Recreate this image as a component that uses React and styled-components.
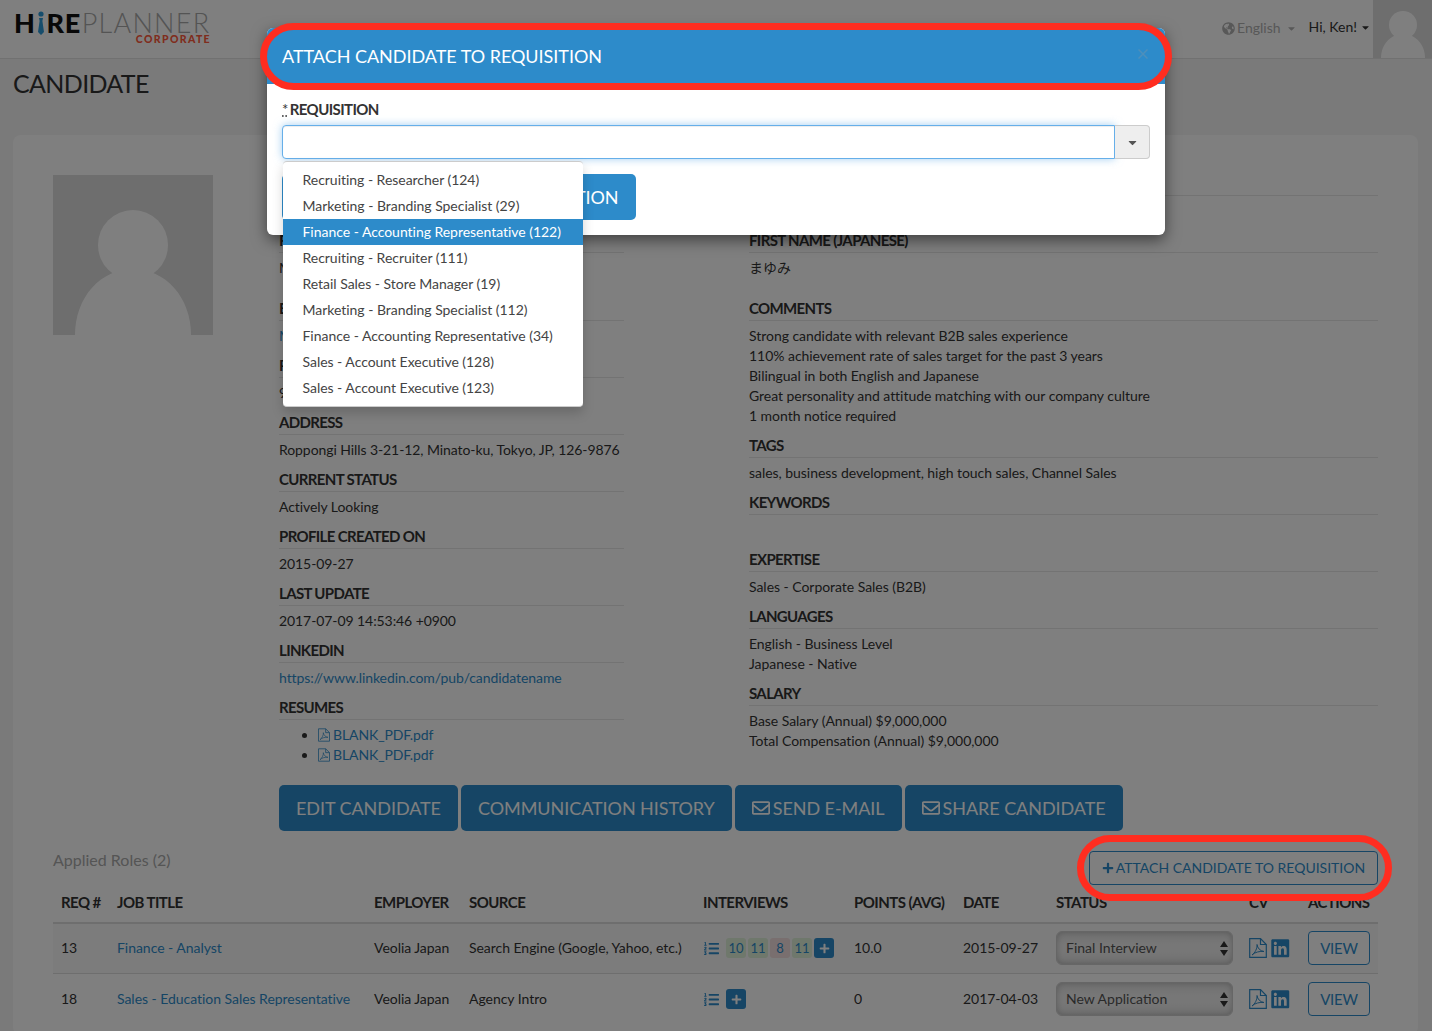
import React from 'react';
import styled, { createGlobalStyle } from 'styled-components';
import { FaGlobeAmericas, FaCaretDown, FaRegEnvelope, FaPlus, FaListOl, FaLinkedin } from 'react-icons/fa';

const Global = createGlobalStyle`
  html, body { margin: 0; padding: 0; height: 1031px; overflow: hidden; background: #f4f4f4; }
  body { font-family: Lato, "Noto Sans CJK JP", "Liberation Sans", sans-serif; font-size: 14px; line-height: 20px; color: #333; }
  * { box-sizing: border-box; }
`;

const Page = styled.div`position: relative; width: 1432px; height: 1031px; overflow: hidden;`;
const Nav = styled.header`
  display: flex; align-items: flex-start; height: 59px; background: #fff; border-bottom: 1px solid #e2e2e2;
`;
const Logo = styled.div`
  margin-left: 14px; width: 197px; padding-top: 9px;
`;
const LogoLine = styled.div`display: flex; align-items: center; height: 27px; font-size: 27px; line-height: 27px;`;
const LogoBold = styled.span`font-weight: 900; color: #111; letter-spacing: .6px;`;
const LogoThin = styled.span`font-weight: 300; color: #a8a8a8; letter-spacing: 1.25px;`;
const LogoSub = styled.div`
  text-align: right; font-size: 10.5px; line-height: 10px; font-weight: 900; letter-spacing: 1.35px; color: #ff5a3c; margin-top: -2px;
`;
const NavRight = styled.div`margin-left: auto; display: flex; align-items: center; height: 58px;`;
const Lang = styled.div`display: flex; align-items: center; color: #b0b0b0; font-size: 14px; margin-right: 12px; margin-top: -2px;
  svg:first-child { font-size: 13px; margin-right: 2px; } svg:last-child { font-size: 11px; margin-left: 5px; }`;
const Hi = styled.div`display: flex; align-items: center; color: #333; font-size: 14px; margin-top: -4px; margin-right: 2px;
  svg { font-size: 11px; margin-left: 3px; }`;
const NavAvatar = styled.svg`display: block; width: 59px; height: 58px; background: #dcdcdc;`;
const Title = styled.h1`margin: 0; padding: 9px 0 0 13px; height: 76px; font-size: 25px; line-height: 30px; font-weight: 400; color: #333; letter-spacing: -.65px;`;

const Panel = styled.main`
  margin: 0 14px 0 13px; background: #fff; border-radius: 8px; padding: 40px 40px 0; height: 900px;
`;
const Top = styled.div`display: flex;`;
const Photo = styled.svg`flex: none; width: 160px; height: 160px; background: #dcdcdc; margin-right: 66px;`;
const LeftCol = styled.section`flex: none; width: 345px; margin-right: 125px; margin-top: -1px; letter-spacing: -.08px;`;
const RightCol = styled.section`flex: 1; margin-top: -1px; letter-spacing: -.04px;`;
const Label = styled.div`
  font-weight: 700; font-size: 15px; line-height: 19px; padding-bottom: 2px; border-bottom: 1px solid #e7e7e7; margin-bottom: 5px; color: #333; letter-spacing: -.65px; white-space: nowrap;
`;
const Value = styled.div`min-height: 20px; margin-bottom: ${p => p.$extra ? '21px' : '10px'}; white-space: nowrap; ${p => p.$jp ? 'height:20px;' : ''}`;
const A = styled.a`color: #2d8bca; text-decoration: none;`;
const Resumes = styled.ul`margin: 0 0 10px; padding: 0 0 0 39px; list-style: disc;
  li { height: 20px; letter-spacing: -.1px; } svg { margin-right: 3px; vertical-align: -2px; }`;
const Actions = styled.div`display: flex; gap: 3px; margin: 10px 0 0 226px; height: 46px;`;
const BigBtn = styled.button`
  height: 46px; background: #2d8bca; color: #fff; border: 0; border-radius: 5px; padding: 0 17px; font-family: inherit; font-size: 18px; line-height: 46px; letter-spacing: -.06px; white-space: nowrap; display: flex; align-items: center;
  svg { font-size: 18px; margin-right: 3px; }
`;
const RolesHead = styled.div`display: flex; justify-content: space-between; align-items: flex-start; margin-top: 20px; height: 34px;`;
const RolesTitle = styled.div`font-size: 16px; color: #aaa; line-height: 20px; letter-spacing: 0; margin-top: -1px;`;
const OutlineBtn = styled.button`
  width: 289px; height: 34px; background: #fff; border: 1px solid #2d8bca; border-radius: 4px; color: #2d8bca; font-family: inherit; font-size: 14px; letter-spacing: -.01px; display: flex; align-items: center; justify-content: center; padding: 0 0 2px; white-space: nowrap;
  svg { font-size: 12px; margin-right: 2px; margin-top: 2px; }
`;
const Table = styled.table`width: 1325px; border-collapse: collapse; table-layout: fixed;
  tbody tr:last-child td { border-bottom: 0; }`;
const Th = styled.th`height: 38px; padding: 0 8px 3px; text-align: left; font-size: 15px; font-weight: 700; border-bottom: 2px solid #ddd; white-space: nowrap; letter-spacing: -.55px; vertical-align: middle;`;
const Tr = styled.tr`background: ${p => p.$striped ? '#f9f9f9' : '#fff'};`;
const Td = styled.td`height: ${p => p.$h}px; padding: 0 8px; border-bottom: 1px solid #ddd; white-space: nowrap; letter-spacing: -.04px; vertical-align: middle;`;
const Interviews = styled.div`display: flex; align-items: center; gap: 2px; color: #2d8bca;
  > svg { font-size: 15px; margin: 0 5px 0 1px; }`;
const Badge = styled.span`
  display: flex; align-items: center; justify-content: center; width: 20px; height: 20px; border-radius: 3px; font-size: 13px; color: #2d8bca; background: ${p => p.$bg};
`;
const AddBadge = styled(Badge)`background: #2d8bca; color: #fff; svg { font-size: 11px; }`;
const SelectWrap = styled.div`position: relative; width: 177px; height: 34px;`;
const Select = styled.div`
  height: 34px; border: 1px solid #ccc; border-radius: 6px; padding: 0 9px; line-height: 32px; color: #555; background: linear-gradient(#e0e0e0, #efefef 40%, #efefef 60%, #e0e0e0); box-shadow: inset 0 0 6px rgba(0,0,0,.22); font-size: 14px; letter-spacing: 0;
`;
const Arrows = styled.svg`position: absolute; right: 5px; top: 10px; width: 8px; height: 15px; fill: #333;`;
const CvIcons = styled.div`display: flex; align-items: center; color: #2d8bca; font-size: 20.5px; gap: 3px;`;
const ViewBtn = styled.button`
  width: 62px; height: 34px; background: #fff; border: 1px solid #2d8bca; border-radius: 4px; color: #2d8bca; font-family: inherit; font-size: 15px; letter-spacing: -.2px; padding: 0;
`;

const Overlay = styled.div`position: absolute; inset: 0; background: rgba(0,0,0,.5);`;
const Modal = styled.div`
  position: absolute; left: 267px; top: 28px; width: 898px; height: 207px; background: #fff; border-radius: 6px; box-shadow: 0 5px 15px rgba(0,0,0,.5);
`;
const ModalHead = styled.div`
  height: 56px; background: #2d8bca; color: #fff; display: flex; align-items: center; justify-content: space-between; padding: 0 17px 0 15px; border-radius: 6px 6px 0 0; font-size: 18px; letter-spacing: -.03px;
`;
const Close = styled.svg`width: 10px; height: 10px; stroke: #4d8fbb; stroke-width: 1.5; margin-top: -4px;`;
const ModalBody = styled.div`padding: 15px; position: relative;`;
const ReqLabel = styled.div`font-size: 15px; font-weight: 700; line-height: 20px; height: 26px; letter-spacing: -.6px; color: #333;
  abbr { font-weight: 400; text-decoration: underline dotted; margin-right: 2px; }`;
const Combo = styled.div`display: flex; height: 34px; width: 868px;`;
const ComboInput = styled.div`
  flex: 1; border: 1px solid #66afe9; border-radius: 4px 0 0 4px; background: #fff; box-shadow: inset 0 1px 1px rgba(0,0,0,.075), 0 0 8px rgba(102,175,233,.6);
`;
const ComboBtn = styled.div`
  width: 35px; border: 1px solid #ccc; border-left: 0; border-radius: 0 4px 4px 0; background: #eee; display: flex; align-items: center; justify-content: center; color: #555; font-size: 13px;
`;
const SubmitBtn = styled(BigBtn)`margin-top: 15px; width: 354px; justify-content: center; padding: 0;`;
const Menu = styled.ul`
  position: absolute; left: 16px; top: 77px; width: 300px; margin: 0; padding: 5px 0; list-style: none; background: #fff; border: solid #ccc; border-width: 1px 0; border-radius: 4px; box-shadow: 0 6px 12px rgba(0,0,0,.175);
`;
const MenuItem = styled.li`
  height: 26px; line-height: 26px; padding: 0 19.5px; font-size: 14px; letter-spacing: -.03px; white-space: nowrap; color: ${p => p.$active ? '#fff' : '#444'}; background: ${p => p.$active ? '#2d8bca' : 'transparent'};
`;
const Ring = styled.div`
  position: absolute; left: ${p => p.$x}px; top: ${p => p.$y}px; width: ${p => p.$w}px; height: ${p => p.$h}px; border: 7px solid #ff2d20; border-radius: 34px; pointer-events: none;
`;

const PdfIcon = ({ w, h }) => (
  <svg width={w} height={h} viewBox="0 0 18 20" fill="none" stroke="currentColor" strokeWidth="1.2">
    <path d="M.7.7 H11.5 L17.3 6.5 V19.3 H.7 Z" />
    <path d="M11.5.7 V6.5 H17.3" />
    <path d="M3 17 C6 15 8.5 10 8 6.5 C8.5 10 11 13 15 13.5 C11 13 6 14 3 17 Z" strokeWidth="1" />
  </svg>
);

const Silhouette = () => (
  <>
    <circle cx="80" cy="70" r="35" fill="#fff" />
    <path d="M22 160 C22 122 48 94 80 94 C112 94 138 122 138 160 Z" fill="#fff" />
  </>
);

const leftRows = [
  ['LAST NAME', 'Tanaka'],
  ['FIRST NAME', 'Mayumi', true],
  ['E-MAIL', <A key="m">Mayumi@example.com</A>],
  ['PHONE', '90-1234-5678'],
  ['ADDRESS', 'Roppongi Hills 3-21-12, Minato-ku, Tokyo, JP, 126-9876'],
  ['CURRENT STATUS', 'Actively Looking'],
  ['PROFILE CREATED ON', '2015-09-27'],
  ['LAST UPDATE', '2017-07-09 14:53:46 +0900'],
  ['LINKEDIN', <A key="l">https://www.linkedin.com/pub/candidatename</A>],
];

const menuItems = [
  'Recruiting - Researcher (124)',
  'Marketing - Branding Specialist (29)',
  'Finance - Accounting Representative (122)',
  'Recruiting - Recruiter (111)',
  'Retail Sales - Store Manager (19)',
  'Marketing - Branding Specialist (112)',
  'Finance - Accounting Representative (34)',
  'Sales - Account Executive (128)',
  'Sales - Account Executive (123)',
];

const widths = [56, 257, 95, 234, 151, 109, 93, 193, 59, 78];
const heads = ['REQ #', 'JOB TITLE', 'EMPLOYER', 'SOURCE', 'INTERVIEWS', 'POINTS (AVG)', 'DATE', 'STATUS', 'CV', 'ACTIONS'];
const G = '#dff0d8';
const R = '#f2dede';

const Status = ({ children }) => (
  <SelectWrap>
    <Select>{children}</Select>
    <Arrows viewBox="0 0 8 15"><path d="M4 0 L8 6 H0 Z M4 15 L0 9 H8 Z" /></Arrows>
  </SelectWrap>
);

const Row = ({ id, title, source, badges, points, date, status, striped, h }) => (
  <Tr $striped={striped}>
    <Td $h={h}>{id}</Td>
    <Td $h={h}><A>{title}</A></Td>
    <Td $h={h}>Veolia Japan</Td>
    <Td $h={h}>{source}</Td>
    <Td $h={h}>
      <Interviews>
        <FaListOl />
        {badges.map(([n, bg], i) => <Badge key={i} $bg={bg}>{n}</Badge>)}
        <AddBadge><FaPlus /></AddBadge>
      </Interviews>
    </Td>
    <Td $h={h}>{points}</Td>
    <Td $h={h}>{date}</Td>
    <Td $h={h}><Status>{status}</Status></Td>
    <Td $h={h}><CvIcons><PdfIcon w={18} h={20} /><FaLinkedin /></CvIcons></Td>
    <Td $h={h}><ViewBtn>VIEW</ViewBtn></Td>
  </Tr>
);

export default function App() {
  return (
    <Page>
      <Global />
      <Nav>
        <Logo>
          <LogoLine>
            <LogoBold>H</LogoBold>
            <svg width="10" height="24" viewBox="0 0 10 24" style={{ margin: '0 1px 0 0' }}>
              <circle cx="5" cy="3" r="2.6" fill="#2d9bd8" />
              <path d="M3 7 H7 L6.4 10 L8 21 L5 24 L2 21 L3.6 10 Z" fill="#2d9bd8" />
            </svg>
            <LogoBold>RE</LogoBold>
            <LogoThin style={{ marginLeft: 1 }}>PLANNER</LogoThin>
          </LogoLine>
          <LogoSub>CORPORATE</LogoSub>
        </Logo>
        <NavRight>
          <Lang><FaGlobeAmericas />English<FaCaretDown /></Lang>
          <Hi>Hi, Ken!<FaCaretDown /></Hi>
          <NavAvatar viewBox="0 0 59 58">
            <circle cx="30" cy="25" r="14" fill="#fff" />
            <path d="M8 58 C8 44 18 34 30 34 C42 34 52 44 52 58 Z" fill="#fff" />
          </NavAvatar>
        </NavRight>
      </Nav>
      <Title>CANDIDATE</Title>
      <Panel>
        <Top>
          <Photo viewBox="0 0 160 160"><Silhouette /></Photo>
          <LeftCol>
            {leftRows.map(([l, v, extra]) => (
              <div key={l}>
                <Label>{l}</Label>
                <Value $extra={extra}>{v}</Value>
              </div>
            ))}
            <Label>RESUMES</Label>
            <Resumes>
              <li><A><PdfIcon w={12} h={14} />BLANK_PDF.pdf</A></li>
              <li><A><PdfIcon w={12} h={14} />BLANK_PDF.pdf</A></li>
            </Resumes>
          </LeftCol>
          <RightCol>
            <Label>LAST NAME (JAPANESE)</Label>
            <Value>たなか</Value>
            <Label>FIRST NAME (JAPANESE)</Label>
            <Value $extra $jp>まゆみ</Value>
            <Label>COMMENTS</Label>
            <Value>
              Strong candidate with relevant B2B sales experience<br />
              110% achievement rate of sales target for the past 3 years<br />
              Bilingual in both English and Japanese<br />
              Great personality and attitude matching with our company culture<br />
              1 month notice required
            </Value>
            <Label>TAGS</Label>
            <Value>sales, business development, high touch sales, Channel Sales</Value>
            <Label>KEYWORDS</Label>
            <Value />
            <Label>EXPERTISE</Label>
            <Value>Sales - Corporate Sales (B2B)</Value>
            <Label>LANGUAGES</Label>
            <Value>English - Business Level<br />Japanese - Native</Value>
            <Label>SALARY</Label>
            <Value>Base Salary (Annual) $9,000,000<br />Total Compensation (Annual) $9,000,000</Value>
          </RightCol>
        </Top>
        <Actions>
          <BigBtn>EDIT CANDIDATE</BigBtn>
          <BigBtn>COMMUNICATION HISTORY</BigBtn>
          <BigBtn><FaRegEnvelope />SEND E-MAIL</BigBtn>
          <BigBtn><FaRegEnvelope />SHARE CANDIDATE</BigBtn>
        </Actions>
        <RolesHead>
          <RolesTitle>Applied Roles (2)</RolesTitle>
          <OutlineBtn><FaPlus />ATTACH CANDIDATE TO REQUISITION</OutlineBtn>
        </RolesHead>
        <Table>
          <colgroup>{widths.map((w, i) => <col key={i} width={w} />)}</colgroup>
          <thead><tr>{heads.map(h => <Th key={h}>{h}</Th>)}</tr></thead>
          <tbody>
            <Row striped h={50} id="13" title="Finance - Analyst" source="Search Engine (Google, Yahoo, etc.)" badges={[['10', G], ['11', G], ['8', R], ['11', G]]} points="10.0" date="2015-09-27" status="Final Interview" />
            <Row h={52} id="18" title="Sales - Education Sales Representative" source="Agency Intro" badges={[]} points="0" date="2017-04-03" status="New Application" />
          </tbody>
        </Table>
      </Panel>
      <Overlay />
      <Modal>
        <ModalHead>
          ATTACH CANDIDATE TO REQUISITION
          <Close viewBox="0 0 10 10"><path d="M.5.5 L9.5 9.5 M9.5.5 L.5 9.5" /></Close>
        </ModalHead>
        <ModalBody>
          <ReqLabel><abbr>*</abbr>REQUISITION</ReqLabel>
          <Combo>
            <ComboInput />
            <ComboBtn><FaCaretDown /></ComboBtn>
          </Combo>
          <SubmitBtn>ATTACH CANDIDATE TO REQUISITION</SubmitBtn>
          <Menu>
            {menuItems.map((m, i) => <MenuItem key={i} $active={i === 2}>{m}</MenuItem>)}
          </Menu>
        </ModalBody>
      </Modal>
      <Ring $x={260} $y={23} $w={912} $h={67} />
      <Ring $x={1077} $y={835} $w={315} $h={66} />
    </Page>
  );
}
